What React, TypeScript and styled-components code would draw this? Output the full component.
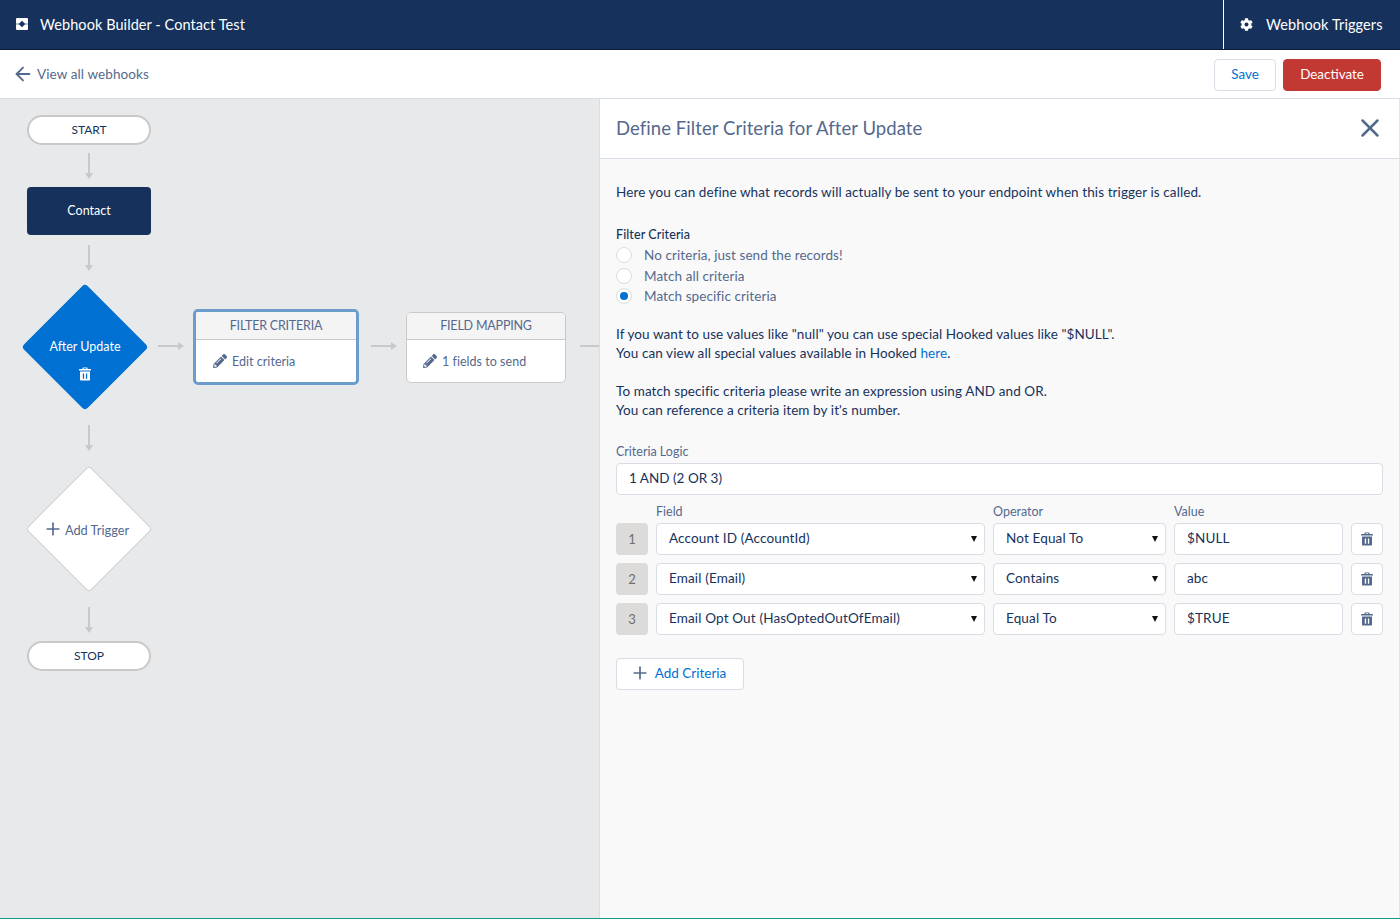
import React from 'react';
import styled, { createGlobalStyle } from 'styled-components';
import { ArrowLeft, Plus, X } from 'lucide-react';
import { FaCog, FaPencilAlt } from 'react-icons/fa';

const Global = createGlobalStyle`
  html, body { margin: 0; padding: 0; height: 100%; }
  body { font-family: Lato, "Open Sans", "Liberation Sans", sans-serif; font-size: 13px; color: #16325c; background: #fff; }
  * { box-sizing: border-box; }
`;

const Page = styled.div`
  width: 1400px; height: 919px; display: flex; flex-direction: column; overflow: hidden;
  border-bottom: 1px solid #159a94;
`;
const TopBar = styled.header`
  height: 50px; flex: none; background: #16325c; border-bottom: 1px solid #0c1b33; display: flex; align-items: stretch; justify-content: space-between; color: #fff;
`;
const TitleBox = styled.div`
  display: flex; align-items: center; padding: 0 0 1px 16px; gap: 12px; font-size: 14.5px; letter-spacing: 0.07px;
`;
const TriggersBox = styled.div`
  width: 177px; border-left: 1px solid #fff; display: flex; align-items: center; padding: 0 0 1px 16px; gap: 13px; font-size: 14.5px; letter-spacing: 0.1px;
`;
const SubBar = styled.div`
  height: 49px; flex: none; background: #fff; border-bottom: 1px solid #d8dde6; display: flex; align-items: center; justify-content: space-between; padding: 0 19px 0 12px;
`;
const BackLink = styled.div`
  display: flex; align-items: center; gap: 3px; color: #54698d; font-size: 13.5px; letter-spacing: 0.1px;
  svg { color: #54698d; }
`;
const Actions = styled.div`display: flex; gap: 7px; margin-top: 1px;`;
const Button = styled.button<{ $danger?: boolean }>`
  height: 32px; width: ${p => (p.$danger ? '98px' : '62px')}; padding: 0 0 2px; border-radius: 4px; font: inherit; font-size: 13.4px; cursor: pointer;
  background: ${p => (p.$danger ? '#c23934' : '#fff')};
  color: ${p => (p.$danger ? '#fff' : '#0070d2')};
  border: 1px solid ${p => (p.$danger ? '#c23934' : '#d8dde6')};
`;
const Main = styled.div`flex: 1; display: flex; min-height: 0;`;
const Canvas = styled.div`
  position: relative; width: 600px; flex: none; background: #e8e9eb; border-right: 1px solid #d8dde6;
`;
const Pill = styled.div<{ $top: number }>`
  position: absolute; left: 27px; top: ${p => p.$top}px; width: 124px; height: 30px; border-radius: 15px; background: #fff;
  border: 2px solid #c9c9c9; display: flex; align-items: center; justify-content: center; font-size: 12px; color: #16325c; padding-bottom: 2px;
`;
const ObjectNode = styled.div`
  position: absolute; left: 27px; top: 88px; width: 124px; height: 48px; border-radius: 4px; background: #16325c; color: #fff;
  display: flex; align-items: center; justify-content: center; font-size: 12.5px; padding-bottom: 2px;
`;
const Diamond = styled.div<{ $cx: number; $cy: number; $filled?: boolean }>`
  position: absolute; left: ${p => p.$cx - 45}px; top: ${p => p.$cy - 45}px; width: 90px; height: 90px; transform: rotate(45deg); border-radius: 4px;
  background: ${p => (p.$filled ? '#0070d2' : '#fff')};
  border: ${p => (p.$filled ? 'none' : '1px solid #cfd0d2')};
`;
const DiamondLabel = styled.div<{ $cx: number; $cy: number; $color: string }>`
  position: absolute; left: ${p => p.$cx - 60}px; top: ${p => p.$cy}px; width: 120px; text-align: center; font-size: 12.5px; color: ${p => p.$color};
  display: flex; flex-direction: column; align-items: center; gap: 13px;
`;
const AddRow = styled.span`display: inline-flex; align-items: center; gap: 2px; color: #54698d; font-size: 12.8px;`;
const AddText = styled.span`position: relative; top: 1px;`;
const ArrowDraw = styled.svg<{ $x: number; $y: number }>`
  position: absolute; left: ${p => p.$x}px; top: ${p => p.$y}px; overflow: visible;
`;
const Card = styled.div<{ $x: number; $y: number; $w: number; $h: number; $active?: boolean }>`
  position: absolute; left: ${p => p.$x}px; top: ${p => p.$y}px; width: ${p => p.$w}px; height: ${p => p.$h}px; background: #fff; border-radius: 5px;
  border: ${p => (p.$active ? '3px solid #6b9ccb' : '1px solid #c9c9c9')}; display: flex; flex-direction: column; overflow: hidden;
`;
const CardHead = styled.div<{ $tall?: boolean }>`
  height: ${p => (p.$tall ? '28px' : '27px')}; flex: none; background: #f4f4f4; border-bottom: 1px solid #c9c9c9; display: flex; align-items: center; justify-content: center; font-size: 12.5px; letter-spacing: -0.2px; color: #54698d; padding-bottom: 1px;
`;
const CardBody = styled.div<{ $active?: boolean }>`
  flex: 1; display: flex; align-items: center; padding: 0 0 0 ${p => (p.$active ? '17px' : '16px')}; gap: 5px; color: #54698d; font-size: 12.5px; letter-spacing: 0.03px;
`;
const Panel = styled.div`
  flex: 1; background: #f9f9f9; display: flex; flex-direction: column; min-width: 0; border-right: 1px solid #e4e4e4;
`;
const PanelHead = styled.div`
  height: 60px; flex: none; background: #fff; border-bottom: 1px solid #d8dde6; display: flex; align-items: center; justify-content: space-between; padding: 0 16px 2px;
  font-size: 18.5px; letter-spacing: 0.07px; color: #54698d;
`;
const PanelBody = styled.div`padding: 24px 16px 0;`;
const Para = styled.p<{ $mb: number }>`
  margin: 0 0 ${p => p.$mb}px; line-height: 19px; font-size: 13.5px; letter-spacing: 0.09px; color: #16325c;
  a { color: #0070d2; text-decoration: none; }
`;
const Label = styled.div`font-size: 12.5px; line-height: 16px; color: #54698d;`;
const StrongLabel = styled(Label)`color: #16325c; font-weight: 500; line-height: 21px; letter-spacing: 0.1px;`;
const RadioList = styled.div`display: flex; flex-direction: column; margin-bottom: 18px;`;
const RadioRow = styled.div`display: flex; align-items: center; height: 20.5px; gap: 12px; color: #54698d; font-size: 13.5px; letter-spacing: 0.08px;`;
const RadioDot = styled.span<{ $on?: boolean }>`
  width: 16px; height: 16px; border-radius: 50%; background: #fff; border: 1px solid #d8dde6; display: flex; align-items: center; justify-content: center;
  &::after { content: ''; width: 8px; height: 8px; border-radius: 50%; background: ${p => (p.$on ? '#0070d2' : 'transparent')}; }
`;
const Input = styled.input`
  width: 100%; height: 32px; border: 1px solid #d8dde6; border-radius: 4px; background: #fff; padding: 0 12px 2px; font: inherit; font-size: 13.5px; letter-spacing: 0.15px; color: #16325c; outline: none; display: block;
`;
const LogicInput = styled(Input)`margin-top: 3px; margin-bottom: 9px; letter-spacing: 0;`;
const Grid = styled.div`
  display: grid; grid-template-columns: 32px 329px 173px 169px 32px; column-gap: 8px; row-gap: 8px; align-items: center;
`;
const HeadLabel = styled(Label)`margin-bottom: -5px;`;
const NumBox = styled.div`
  height: 32px; border-radius: 4px; background: #dddbda; color: #706e6b; display: flex; align-items: center; justify-content: center; font-size: 13px;
`;
const SelectWrap = styled.div`
  position: relative;
  &::after { content: ''; position: absolute; right: 8px; top: 13px; border-left: 3px solid transparent; border-right: 3px solid transparent; border-top: 6px solid #111; pointer-events: none; }
`;
const Select = styled.select`
  appearance: none; width: 100%; height: 32px; border: 1px solid #d8dde6; border-radius: 4px; background: #fff; padding: 0 12px 2px; font: inherit; font-size: 13.5px; letter-spacing: 0.15px; color: #16325c; outline: none; display: block;
`;
const IconBtn = styled.button`
  width: 32px; height: 32px; border: 1px solid #d8dde6; border-radius: 4px; background: #fff; display: flex; align-items: center; justify-content: center; padding: 0; color: #54698d;
`;
const AddButton = styled.button`
  margin-top: 23px; height: 32px; width: 128px; border: 1px solid #d8dde6; border-radius: 4px; background: #fff; color: #0070d2; font: inherit; font-size: 13.5px; display: flex; align-items: center; justify-content: center; gap: 5px; padding: 0 4px 1px 0;
  svg { color: #54698d; }
`;
const CloseBtn = styled.span`display: flex; margin: 0 -2px 0 0; color: #54698d;`;

const Trash = ({ size = 14, color = 'currentColor' }: { size?: number; color?: string }) => (
  <svg width={size} height={size} viewBox="0 0 14 14" fill={color}>
    <path d="M5.2 0.4h3.6c.4 0 .7.3.7.7v1h3c.3 0 .5.2.5.5v.8H1v-.8c0-.3.2-.5.5-.5h3v-1c0-.4.3-.7.7-.7zM5.8 1.3v.8h2.4v-.8z" fillRule="evenodd" />
    <path d="M2 4.6h10v8c0 .6-.5 1-1 1H3c-.5 0-1-.4-1-1zM4.8 6.4v5.4h1.3V6.4zM7.9 6.4v5.4h1.3V6.4z" fillRule="evenodd" />
  </svg>
);

const BuilderIcon = () => (
  <svg width="12" height="12" viewBox="0 0 12 12">
    <rect width="12" height="12" rx="1" fill="#fff" />
    <rect y="5.4" width="12" height="1.2" fill="#8496ae" />
    <path d="M6 2.8 9.2 6 6 9.2 2.8 6z" fill="#16325c" />
  </svg>
);

const VArrow = ({ y }: { y: number }) => (
  <ArrowDraw $x={85} $y={y} width="8" height="26">
    <path d="M4 0v21" stroke="#c9c9c9" strokeWidth="2" fill="none" />
    <path d="M0 20h8l-4 6z" fill="#c9c9c9" />
  </ArrowDraw>
);
const HArrow = ({ x, y }: { x: number; y: number }) => (
  <ArrowDraw $x={x} $y={y} width="26" height="8">
    <path d="M0 4h21" stroke="#c9c9c9" strokeWidth="2" fill="none" />
    <path d="M20 0v8l6-4z" fill="#c9c9c9" />
  </ArrowDraw>
);

const rows = [
  { n: 1, field: 'Account ID (AccountId)', op: 'Not Equal To', value: '$NULL' },
  { n: 2, field: 'Email (Email)', op: 'Contains', value: 'abc' },
  { n: 3, field: 'Email Opt Out (HasOptedOutOfEmail)', op: 'Equal To', value: '$TRUE' },
];

export default function App() {
  return (
    <Page>
      <Global />
      <TopBar>
        <TitleBox><BuilderIcon />Webhook Builder - Contact Test</TitleBox>
        <TriggersBox><FaCog size={13} />Webhook Triggers</TriggersBox>
      </TopBar>
      <SubBar>
        <BackLink><ArrowLeft size={22} strokeWidth={2} />View all webhooks</BackLink>
        <Actions>
          <Button>Save</Button>
          <Button $danger>Deactivate</Button>
        </Actions>
      </SubBar>
      <Main>
        <Canvas>
          <Pill $top={16}>START</Pill>
          <VArrow y={54} />
          <ObjectNode>Contact</ObjectNode>
          <VArrow y={146} />
          <Diamond $cx={85} $cy={248} $filled />
          <DiamondLabel $cx={85} $cy={240} $color="#fff">After Update<Trash size={14} color="#fff" /></DiamondLabel>
          <HArrow x={158} y={243} />
          <Card $x={193} $y={210} $w={166} $h={76} $active>
            <CardHead $tall>FILTER CRITERIA</CardHead>
            <CardBody $active><FaPencilAlt size={14} color="#54698d" />Edit criteria</CardBody>
          </Card>
          <HArrow x={371} y={243} />
          <Card $x={406} $y={213} $w={160} $h={71}>
            <CardHead>FIELD MAPPING</CardHead>
            <CardBody><FaPencilAlt size={14} color="#54698d" />1 fields to send</CardBody>
          </Card>
          <ArrowDraw $x={580} $y={243} width="20" height="8"><path d="M0 4h19" stroke="#c9c9c9" strokeWidth="2" /></ArrowDraw>
          <VArrow y={326} />
          <Diamond $cx={89} $cy={430} />
          <DiamondLabel $cx={86} $cy={420} $color="#54698d"><AddRow><Plus size={20} strokeWidth={2} /><AddText>Add Trigger</AddText></AddRow></DiamondLabel>
          <VArrow y={508} />
          <Pill $top={542}>STOP</Pill>
        </Canvas>
        <Panel>
          <PanelHead>Define Filter Criteria for After Update<CloseBtn><X size={30} strokeWidth={2} /></CloseBtn></PanelHead>
          <PanelBody>
            <Para $mb={22}>Here you can define what records will actually be sent to your endpoint when this trigger is called.</Para>
            <StrongLabel>Filter Criteria</StrongLabel>
            <RadioList>
              <RadioRow><RadioDot />No criteria, just send the records!</RadioRow>
              <RadioRow><RadioDot />Match all criteria</RadioRow>
              <RadioRow><RadioDot $on />Match specific criteria</RadioRow>
            </RadioList>
            <Para $mb={19}>If you want to use values like "null" you can use special Hooked values like "$NULL".<br />You can view all special values available in Hooked <a>here</a>.</Para>
            <Para $mb={24}>To match specific criteria please write an expression using AND and OR.<br />You can reference a criteria item by it's number.</Para>
            <Label>Criteria Logic</Label>
            <LogicInput defaultValue="1 AND (2 OR 3)" />
            <Grid>
              <span />
              <HeadLabel>Field</HeadLabel>
              <HeadLabel>Operator</HeadLabel>
              <HeadLabel>Value</HeadLabel>
              <span />
              {rows.map(r => (
                <React.Fragment key={r.n}>
                  <NumBox>{r.n}</NumBox>
                  <SelectWrap><Select defaultValue={r.field}><option>{r.field}</option></Select></SelectWrap>
                  <SelectWrap><Select defaultValue={r.op}><option>{r.op}</option></Select></SelectWrap>
                  <Input defaultValue={r.value} />
                  <IconBtn><Trash size={14} /></IconBtn>
                </React.Fragment>
              ))}
            </Grid>
            <AddButton><Plus size={20} strokeWidth={2} />Add Criteria</AddButton>
          </PanelBody>
        </Panel>
      </Main>
    </Page>
  );
}
